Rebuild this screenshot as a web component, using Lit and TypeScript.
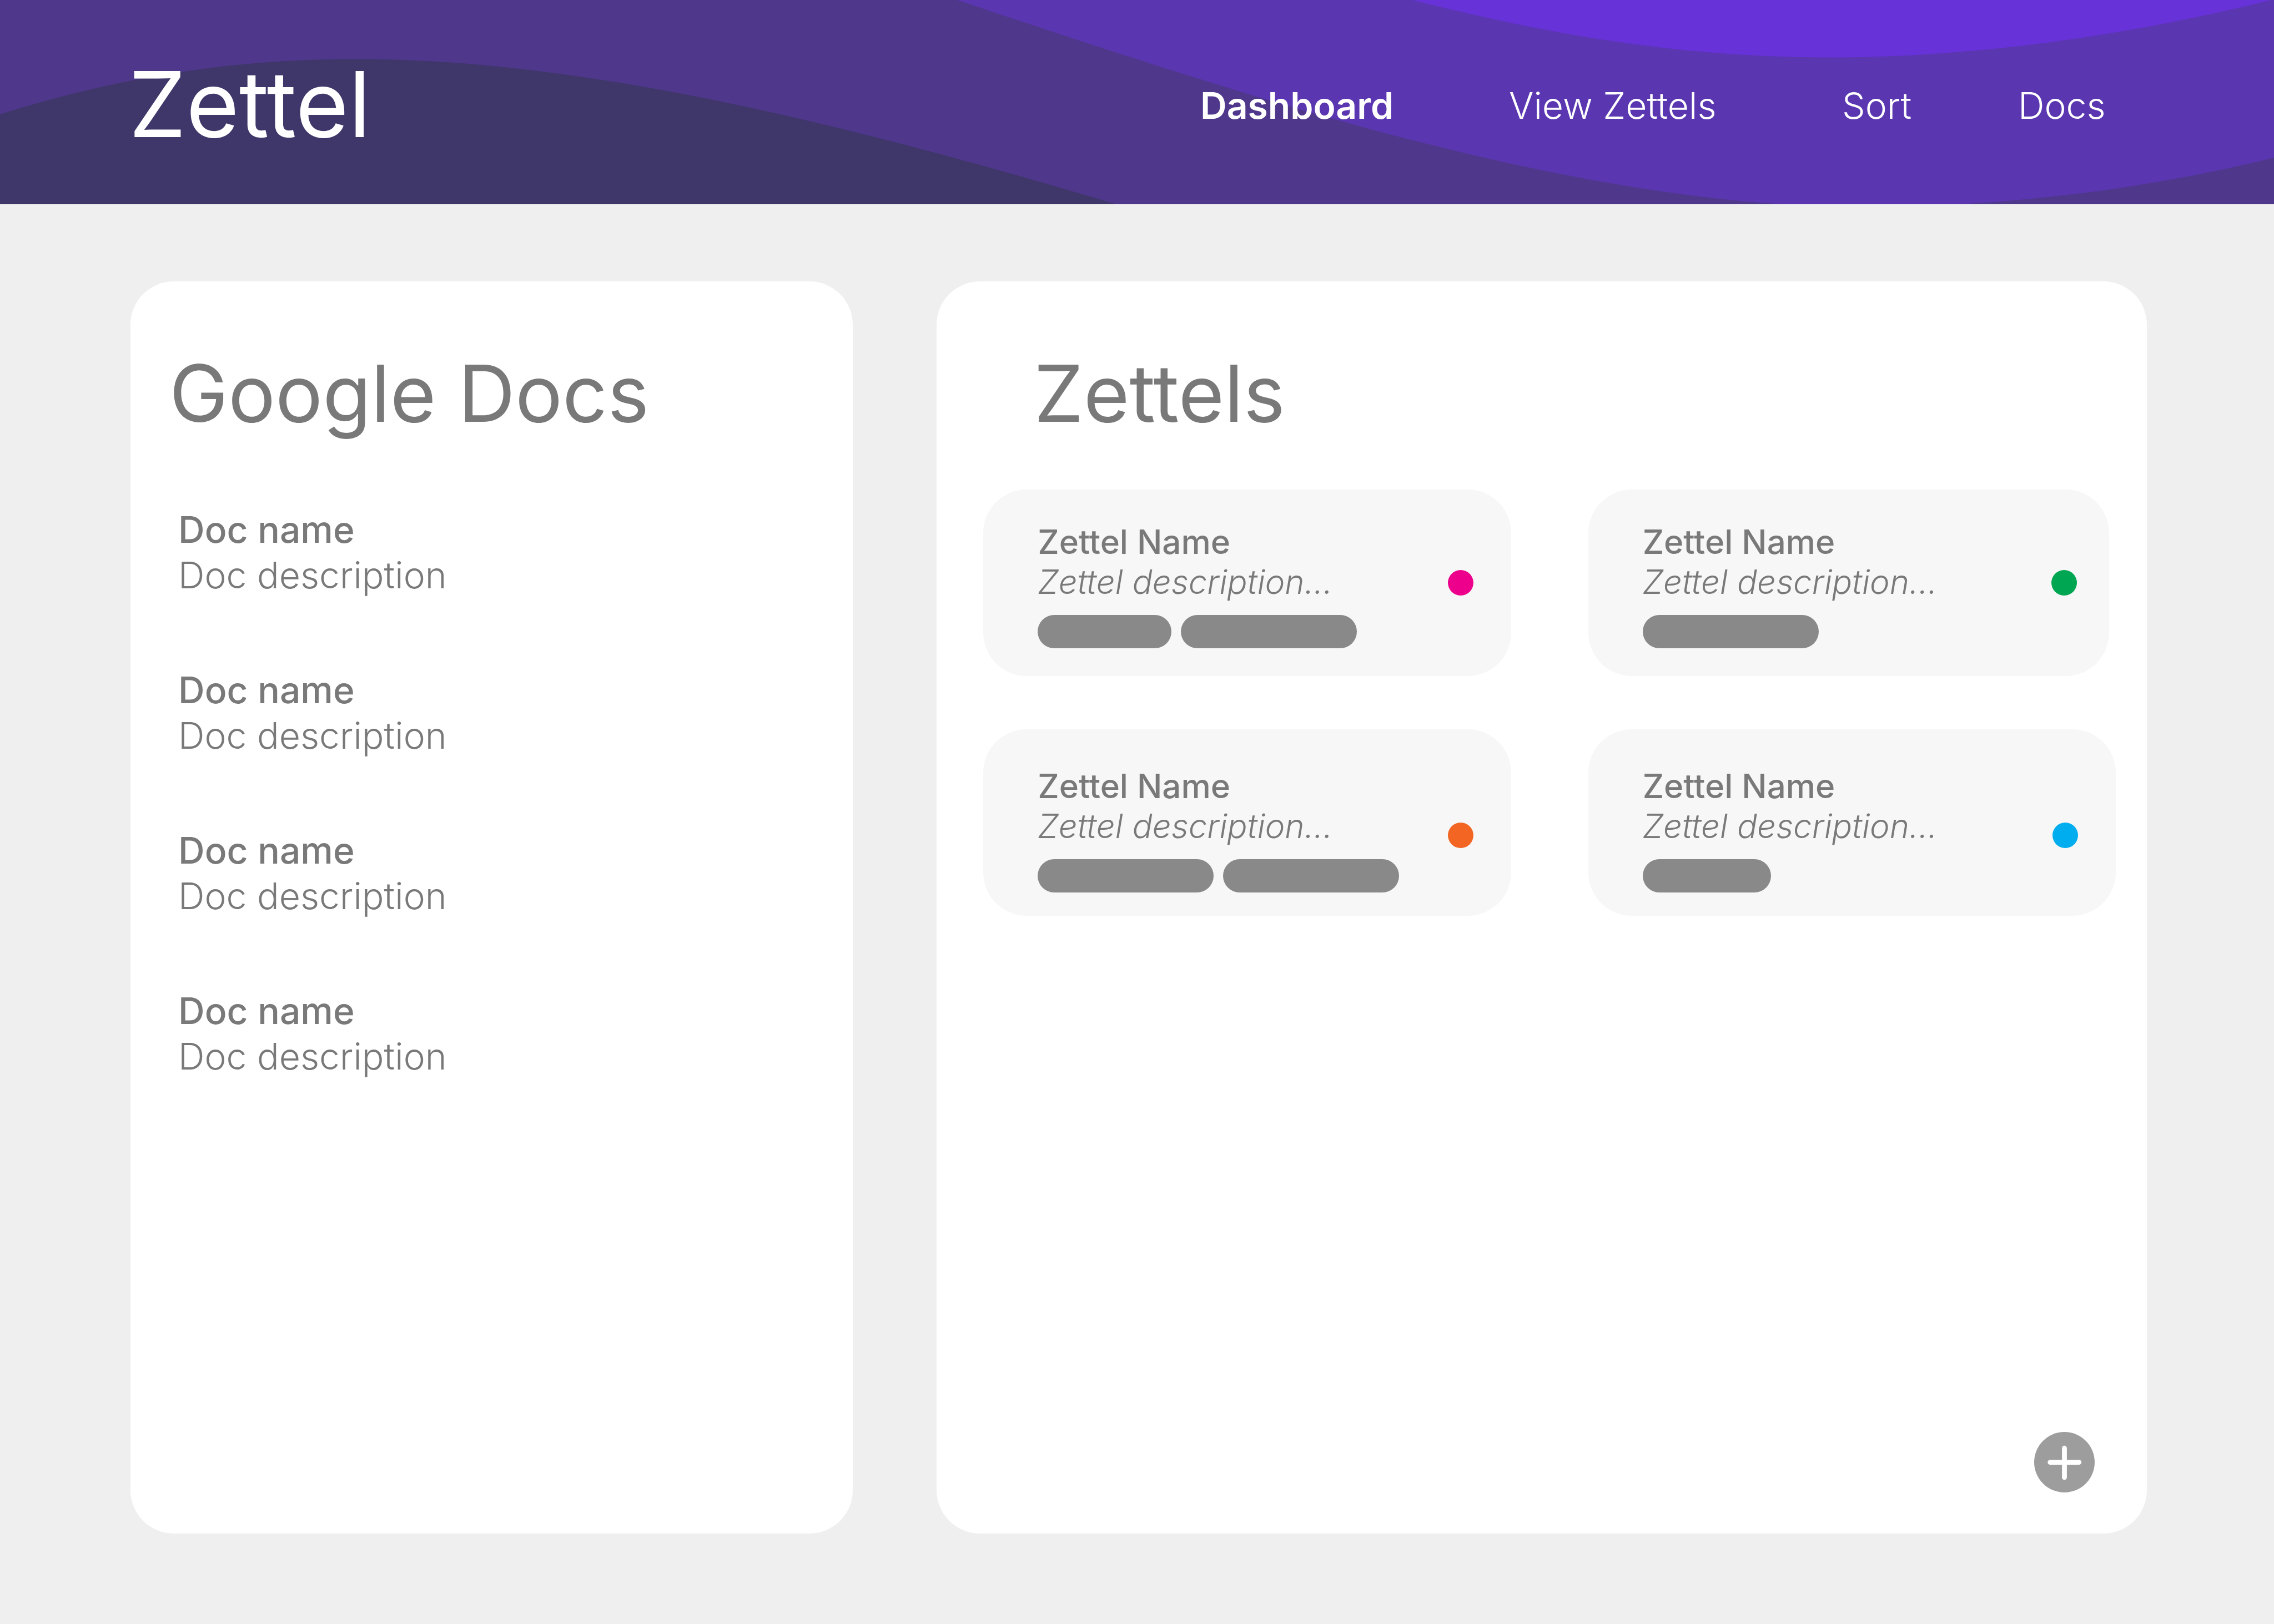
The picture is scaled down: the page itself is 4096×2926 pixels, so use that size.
import { LitElement, html, css } from "lit";
import { customElement, property } from "lit/decorators.js";
import { classMap } from "lit/directives/class-map.js";

interface NavItem {
  label: string;
  href: string;
  current?: boolean;
}

interface Doc {
  name: string;
  description: string;
}

interface Zettel {
  name: string;
  description: string;
  color: string;
  tags: number[];
  narrow?: boolean;
}

const NAV: NavItem[] = [
  { label: "Dashboard", href: "#dashboard", current: true },
  { label: "View Zettels", href: "#zettels" },
  { label: "Sort", href: "#sort" },
  { label: "Docs", href: "#docs" },
];

const DOCS: Doc[] = Array.from({ length: 4 }, () => ({
  name: "Doc name",
  description: "Doc description",
}));

const zettel = (color: string, tags: number[], narrow = false): Zettel => ({
  name: "Zettel Name",
  description: "Zettel description...",
  color,
  tags,
  narrow,
});

const ZETTELS: Zettel[] = [
  zettel("#ec008c", [241, 317]),
  zettel("#00a651", [317], true),
  zettel("#f26522", [317, 317]),
  zettel("#00aeef", [231]),
];

@customElement("zettel-header")
export class ZettelHeader extends LitElement {
  static styles = css`
    :host {
      display: block;
    }
    .bar {
      display: grid;
      position: relative;
      height: 368px;
      background: #4f388c;
      overflow: hidden;
    }
    .waves {
      position: absolute;
      inset: 0;
      width: 100%;
      height: 100%;
    }
    .content {
      position: relative;
      display: flex;
      align-items: center;
      justify-content: space-between;
      padding: 8px 301px 0 232px;
      color: #fff;
    }
    .logo {
      font-size: 164px;
      line-height: 168px;
      font-weight: 400;
      color: inherit;
      text-decoration: none;
    }
    .nav {
      display: grid;
      grid-template-columns: 556px 600px 317px 160px;
      padding-top: 4px;
    }
    .link {
      font-size: 66px;
      line-height: 82px;
      font-weight: 300;
      color: inherit;
      text-decoration: none;
      white-space: nowrap;
    }
    .link.current {
      font-weight: 600;
    }
  `;

  render() {
    return html`
      <header class="bar">
        <svg class="waves" viewBox="0 0 4200 377" preserveAspectRatio="none" aria-hidden="true">
          <path fill="#3f366a" d="M0 211C220 142 430 109 656 109C1100 109 1600 240 2062 377H0Z" />
          <path fill="#5a36b1" d="M1768 0C2280 170 2900 382 3440 382C3720 382 3980 345 4200 291V0Z" />
          <path fill="#6832d9" d="M2609 0C2870 66 3110 106 3386 106C3640 106 3930 66 4194 0Z" />
        </svg>
        <div class="content">
          <a class="logo" href="#home">Zettel</a>
          <nav class="nav">
            ${NAV.map(
              (item) => html`<a
                class=${classMap({ link: true, current: !!item.current })}
                href=${item.href}
                >${item.label}</a
              >`
            )}
          </nav>
        </div>
      </header>
    `;
  }
}

@customElement("zettel-card")
export class ZettelCard extends LitElement {
  @property({ attribute: false }) zettel!: Zettel;
  @property({ type: Boolean }) low = false;

  static styles = css`
    :host {
      display: grid;
    }
    .card {
      display: flex;
      align-items: center;
      justify-content: space-between;
      box-sizing: border-box;
      min-height: 336px;
      padding: 0 68px 0 98px;
      border-radius: 78px;
      background: #f7f7f7;
    }
    .card.narrow {
      margin-right: 12px;
      padding-right: 58px;
    }
    .text {
      align-self: flex-end;
      padding-bottom: 50px;
    }
    .low .text {
      padding-bottom: 42px;
    }
    .name,
    .description {
      margin: 0;
      font-size: 60px;
      line-height: 72px;
    }
    .name {
      font-weight: 500;
    }
    .description {
      font-weight: 300;
      font-style: italic;
    }
    .tags {
      display: flex;
      gap: 17px;
      margin-top: 24px;
    }
    .tag {
      height: 60px;
      border-radius: 30px;
      background: #898989;
    }
    .dot {
      flex: none;
      width: 46px;
      height: 46px;
      border-radius: 50%;
    }
    .low .dot {
      margin-top: 46px;
    }
  `;

  render() {
    const { name, description, color, tags, narrow } = this.zettel;
    return html`
      <article class=${classMap({ card: true, narrow: !!narrow, low: this.low })}>
        <div class="text">
          <h3 class="name">${name}</h3>
          <p class="description">${description}</p>
          <div class="tags">
            ${tags.map((width) => html`<span class="tag" style="width:${width}px"></span>`)}
          </div>
        </div>
        <span class="dot" style="background:${color}"></span>
      </article>
    `;
  }
}

@customElement("app-root")
export class AppRoot extends LitElement {
  static styles = css`
    :host {
      display: flex;
      flex-direction: column;
      min-height: 100vh;
      background: #efefef;
      color: #797979;
      font-family: Inter, Lato, sans-serif;
      font-variant-ligatures: none;
    }
    .main {
      flex: 1;
      display: grid;
      grid-template-columns: 1301fr 2179fr;
      gap: 151px;
      padding: 139px 229px 163px 235px;
    }
    .panel {
      display: flex;
      flex-direction: column;
      padding: 129px 56px 74px 70px;
      border-radius: 78px;
      background: #fff;
    }
    .panel.zettels {
      padding-left: 84px;
    }
    .title {
      margin: 0;
      font-size: 142px;
      line-height: 144px;
      font-weight: 400;
    }
    .zettels .title {
      padding-left: 91px;
    }
    .docs {
      display: flex;
      flex-direction: column;
      gap: 125px;
      margin: 133px 0 0;
      padding: 0 0 0 16px;
      list-style: none;
    }
    .doc-name,
    .doc-description {
      margin: 0;
      font-size: 66px;
      line-height: 82px;
    }
    .doc-name {
      font-weight: 500;
    }
    .doc-description {
      font-weight: 300;
    }
    .cards {
      display: grid;
      grid-template-columns: 1fr 1fr;
      gap: 96px 139px;
      margin-top: 102px;
    }
    .add {
      display: flex;
      align-self: flex-end;
      margin: auto 38px 0 0;
      padding: 0;
      border: 0;
      border-radius: 50%;
      background: none;
      cursor: pointer;
    }
    .add-icon {
      width: 109px;
      height: 109px;
    }
  `;

  render() {
    return html`
      <zettel-header></zettel-header>
      <main class="main">
        <section class="panel">
          <h2 class="title">Google Docs</h2>
          <ul class="docs">
            ${DOCS.map(
              (doc) => html`<li>
                <h3 class="doc-name">${doc.name}</h3>
                <p class="doc-description">${doc.description}</p>
              </li>`
            )}
          </ul>
        </section>
        <section class="panel zettels">
          <h2 class="title">Zettels</h2>
          <div class="cards">
            ${ZETTELS.map(
              (item, index) => html`<zettel-card .zettel=${item} ?low=${index > 1}></zettel-card>`
            )}
          </div>
          <button class="add" type="button" aria-label="Add zettel">
            <svg class="add-icon" viewBox="0 0 112 112" aria-hidden="true">
              <circle cx="56" cy="56" r="56" fill="#9d9d9d" />
              <path
                d="M29.5 56.2H83M56 30V84.2"
                fill="none"
                stroke="#fff"
                stroke-width="9"
                stroke-linecap="round"
              />
            </svg>
          </button>
        </section>
      </main>
    `;
  }
}
